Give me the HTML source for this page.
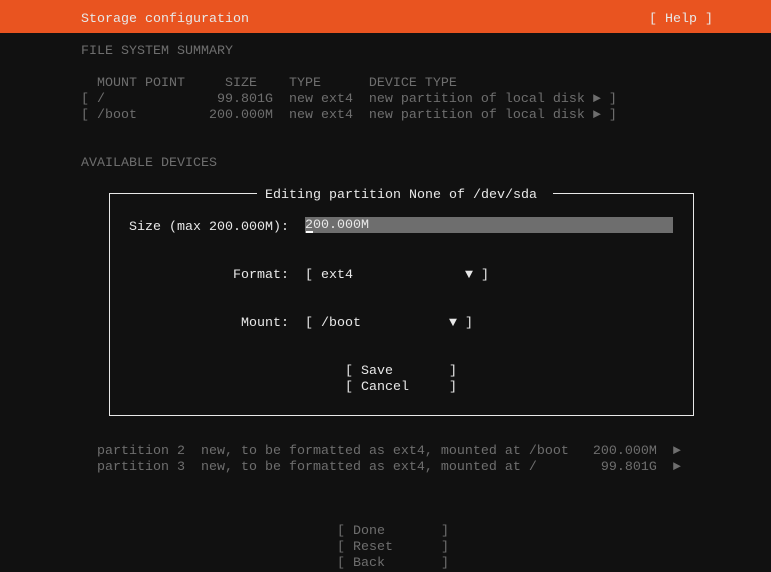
<!DOCTYPE html>
<html><head><meta charset="utf-8"><style>
html,body{margin:0;padding:0;background:#111;width:771px;height:570px;overflow:hidden}
.t{position:absolute;font-family:"Liberation Mono","DejaVu Sans Mono",monospace;font-size:13.33px;line-height:16px;white-space:pre;color:#6e6e6e;margin-top:2px}
.w{color:#e8e8e8}
#bar{position:absolute;left:0;top:0;width:771px;height:33px;background:#e95420}
.box{position:absolute;left:109px;top:193px;width:583px;height:221px;border:1px solid #e8e8e8}
.field{position:absolute;left:305px;top:217px;width:368px;height:16px;background:#6e6e6e}
.cur{position:absolute;left:306px;top:231px;width:7px;height:2px;background:#fff}
.ttl{position:absolute;left:257px;top:185px;width:296px;height:16px;background:#111}
</style></head><body>
<div id="bar"></div>
<div class="t w" style="left:81px;top:10px">Storage configuration</div>
<div class="t w" style="left:649px;top:10px">[ Help ]</div>
<div class="t" style="left:81px;top:42px">FILE SYSTEM SUMMARY</div>
<div class="t" style="left:81px;top:74px">  MOUNT POINT     SIZE    TYPE      DEVICE TYPE</div>
<div class="t" style="left:81px;top:90px">[ /              99.801G  new ext4  new partition of local disk ► ]</div>
<div class="t" style="left:81px;top:106px">[ /boot         200.000M  new ext4  new partition of local disk ► ]</div>
<div class="t" style="left:81px;top:154px">AVAILABLE DEVICES</div>
<div class="box"></div>
<div class="ttl"></div>
<div class="t w" style="left:257px;top:186px"> Editing partition None of /dev/sda </div>
<div class="t w" style="left:129px;top:218px">Size (max 200.000M):</div>
<div class="field"></div>
<div class="t w" style="left:305px;top:216px">200.000M</div>
<div class="cur"></div>
<div class="t w" style="left:233px;top:266px">Format:  [ ext4              ▼ ]</div>
<div class="t w" style="left:241px;top:314px">Mount:  [ /boot           ▼ ]</div>
<div class="t w" style="left:345px;top:362px">[ Save       ]</div>
<div class="t w" style="left:345px;top:378px">[ Cancel     ]</div>
<div class="t" style="left:97px;top:442px">partition 2  new, to be formatted as ext4, mounted at /boot   200.000M  ►</div>
<div class="t" style="left:97px;top:458px">partition 3  new, to be formatted as ext4, mounted at /        99.801G  ►</div>
<div class="t" style="left:337px;top:522px">[ Done       ]</div>
<div class="t" style="left:337px;top:538px">[ Reset      ]</div>
<div class="t" style="left:337px;top:554px">[ Back       ]</div>
</body></html>
